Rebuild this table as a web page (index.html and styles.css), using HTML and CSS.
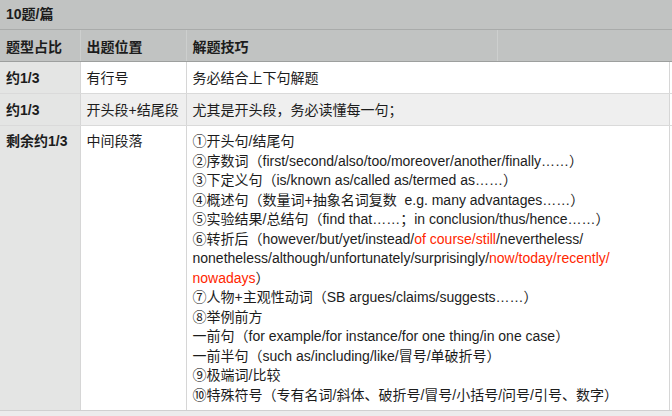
FILE: index.html
```html
<!DOCTYPE html>
<html>
	<head>
		<meta charset="utf-8">
		<title>10题/篇</title>
		<meta name="viewport" content="width=device-width,initial-scale=1">
		<link rel="stylesheet" href="styles.css">
	</head>
	<body>
		<div class="title">10题/篇</div>
		<table class="grid">
			<colgroup>
				<col class="c1">
				<col class="c2">
				<col class="c3">
				<col>
			</colgroup>
			<thead>
				<tr>
					<th>题型占比</th>
					<th>出题位置</th>
					<th>解题技巧</th>
					<th></th>
				</tr>
			</thead>
			<tbody>
				<tr>
					<td class="key">约1/3</td>
					<td>有行号</td>
					<td class="last" colspan="2">务必结合上下句解题</td>
				</tr>
				<tr class="alt">
					<td class="key">约1/3</td>
					<td>开头段+结尾段</td>
					<td class="last" colspan="2">尤其是开头段，务必读懂每一句；</td>
				</tr>
				<tr class="tall">
					<td class="key">剩余约1/3</td>
					<td>中间段落</td>
					<td class="last" colspan="2">
						①开头句/结尾句<br>
						②序数词（first/second/also/too/moreover/another/finally……）<br>
						③下定义句（is/known as/called as/termed as……）<br>
						④概述句（数量词+抽象名词复数&nbsp; e.g. many advantages……）<br>
						⑤实验结果/总结句（find that……；in conclusion/thus/hence……）<br>
						⑥转折后（however/but/yet/instead/<span class="red">of course/still</span>/nevertheless/<br>nonetheless/although/unfortunately/surprisingly/<span class="red">now/today/recently/</span><br><span class="red">nowadays</span>）<br>
						⑦人物+主观性动词（SB argues/claims/suggests……）<br>
						⑧举例前方<br>
						一前句（for example/for instance/for one thing/in one case）<br>
						一前半句（such as/including/like/冒号/单破折号）<br>
						⑨极端词/比较<br>
						⑩特殊符号（专有名词/斜体、破折号/冒号/小括号/问号/引号、数字）
					</td>
				</tr>
			</tbody>
		</table>
	</body>
</html>
```

FILE: styles.css
```css
* {
	margin: 0;
	padding: 0;
}

body {
	width: 672px;
	height: 416px;
	overflow: hidden;
	background: #ececec;
	color: #1c1c1c;
	font-family: 'Liberation Sans', 'Noto Sans CJK SC', sans-serif;
	font-size: 14px;
}

.title {
	height: 29px;
	line-height: 29px;
	padding: 0 6px;
	font-weight: bold;
	background: #c1c3c2;
	border-bottom: 1px solid #a9abaa;
}

.grid {
	width: 672px;
	border-collapse: collapse;
	table-layout: fixed;
	font-size: 14px;
}

.c1 {
	width: 80px;
}

.c2 {
	width: 106px;
}

.c3 {
	width: 311px;
}

th {
	height: 31px;
	padding: 0 6px;
	text-align: left;
	font-weight: bold;
	background: #c1c3c2;
	border-left: 1px solid #cdcfce;
	border-bottom: 1px solid #9d9f9e;
}

th:first-child {
	border-left: none;
}

td {
	padding: 6px 6px 5px;
	line-height: 20px;
	vertical-align: top;
	background: #fff;
	border-left: 1px solid #d6d6d6;
	border-bottom: 1px solid #dadada;
	white-space: nowrap;
}

td.key {
	border-left: none;
	font-weight: bold;
	background: #e4e5e4;
}

td.last {
	box-shadow: inset -2px 0 #fff, inset -3px 0 #d6d6d6;
}

.alt td {
	background: #efefef;
}

.alt td.key {
	background: #e4e5e4;
}

.alt td.last {
	box-shadow: inset -2px 0 #fff, inset -3px 0 #d6d6d6;
}

.tall td {
	line-height: 19.5px;
	height: 273px;
	border-bottom-color: #d0d0d0;
}

.red {
	color: #ff2600;
}
```
